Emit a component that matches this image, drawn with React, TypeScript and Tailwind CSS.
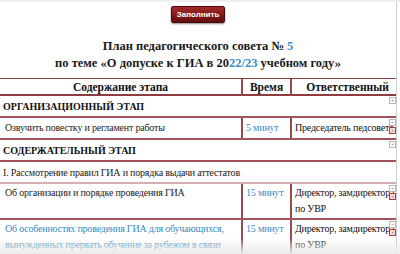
function AddBox() {
  return (
    <span className="flex h-[7px] w-[7px] items-center justify-center border border-[#b8b8b8] bg-white text-[6px] leading-none text-[#999]">
      +
    </span>
  );
}

function DelBox() {
  return (
    <span className="flex h-[7px] w-[7px] items-center justify-center border border-[#b03a3a] bg-[#f4dede] text-[6px] leading-none text-[#b03a3a]">
      ×
    </span>
  );
}

function Tools({ del }: { del?: boolean }) {
  return (
    <div className="absolute right-[1px] top-[1px] flex flex-col gap-[1px]">
      <AddBox />
      {del && <DelBox />}
    </div>
  );
}

function Section({ title }: { title: string }) {
  return (
    <div className="relative flex h-[22px] items-center border-b-2 border-[#a0545a] pl-[3px] text-[10px] font-bold text-[#111]">
      {title}
      <Tools />
    </div>
  );
}

interface StepProps {
  text: React.ReactNode;
  time: string;
  who: React.ReactNode;
  blue?: boolean;
  tall?: boolean;
}

function Step({ text, time, who, blue, tall }: StepProps) {
  const cell = tall ? 'pt-[1px]' : 'items-center';
  return (
    <div
      className={`relative grid grid-cols-[241px_49px_1fr] border-b-2 border-[#a0545a] text-[10px] tracking-[-0.2px] ${
        tall ? 'min-h-[36px]' : 'h-[22px]'
      }`}
    >
      <div className={`flex whitespace-nowrap pl-[5px] leading-[16px] ${cell} ${blue ? 'text-[#3a8bc0]' : 'text-[#222]'}`}>
        <span>{text}</span>
      </div>
      <div className={`flex whitespace-nowrap border-l-2 border-[#9a4a4e] pl-[3px] leading-[16px] text-[#3a8bc0] ${cell}`}>
        <span>{time}</span>
      </div>
      <div
        className={`flex overflow-hidden whitespace-nowrap border-l-2 border-[#9a4a4e] pl-[3px] leading-[16px] text-[#111] ${cell}`}
      >
        <span>{who}</span>
      </div>
      <Tools del />
    </div>
  );
}

export default function App() {
  return (
    <div className="relative h-[254px] w-[400px] overflow-hidden bg-white font-['Liberation_Serif',serif]">
      <div className="h-[2px] w-full bg-[#efefef]" />
      <div className="h-[252px] w-[397px] overflow-hidden border-r border-[#cfcfcf]">
        <div className="flex justify-center pt-[4px]">
          <button className="h-[17px] w-[54px] rounded-[2px] border border-[#4a0808] bg-gradient-to-b from-[#a32a2a] to-[#650d0d] font-['Liberation_Sans',sans-serif] text-[8px] font-bold text-white shadow-[0_1px_2px_rgba(0,0,0,0.45)]">
            Заполнить
          </button>
        </div>

        <div className="mt-[15px] text-center text-[12.5px] font-bold leading-[17px] text-[#1a1a1a]">
          <div>
            План педагогического совета № <span className="text-[#3a8bc0]">5</span>
          </div>
          <div>
            по теме «О допуске к ГИА в 20<span className="text-[#3a8bc0]">22/23</span> учебном году»
          </div>
        </div>

        <div className="mt-[6px] w-[397px]">
          <div className="grid h-[18px] grid-cols-[241px_49px_1fr] items-center border-y border-b-2 border-[#8e3c40] text-[11.5px] font-bold text-[#111]">
            <div className="text-center">Содержание этапа</div>
            <div className="flex h-full items-center justify-center border-l-2 border-[#9a4a4e]">Время</div>
            <div className="flex h-full items-center justify-center border-l-2 border-[#9a4a4e] pl-[6px]">
              Ответственный
            </div>
          </div>

          <Section title="ОРГАНИЗАЦИОННЫЙ ЭТАП" />
          <Step text="Озвучить повестку и регламент работы" time="5 минут" who="Председатель педсовета" />
          <Section title="СОДЕРЖАТЕЛЬНЫЙ ЭТАП" />
          <div className="flex h-[22px] items-center border-b-2 border-[#d6adb0] pl-[3px] text-[10px] tracking-[-0.2px] text-[#222]">
            I. Рассмотрение правил ГИА и порядка выдачи аттестатов
          </div>
          <Step
            tall
            text="Об организации и порядке проведения ГИА"
            time="15 минут"
            who={
              <>
                Директор, замдиректора
                <br />
                по УВР
              </>
            }
          />
          <Step
            tall
            blue
            text={
              <>
                Об особенностях проведения ГИА для обучающихся,
                <br />
                вынужденных прервать обучение за рубежом в связи
              </>
            }
            time="15 минут"
            who={
              <>
                Директор, замдиректора
                <br />
                по УВР
              </>
            }
          />
        </div>
      </div>
      <div className="pointer-events-none absolute bottom-0 left-0 h-[16px] w-full bg-gradient-to-b from-white/0 to-[#ebebeb]" />
    </div>
  );
}
